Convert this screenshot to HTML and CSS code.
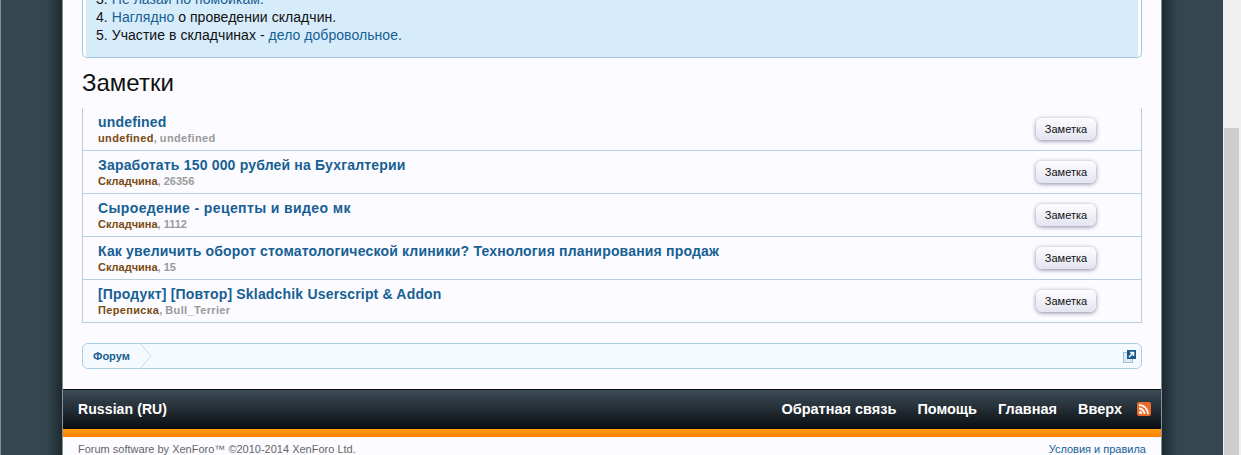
FILE: index.html
```html
<!DOCTYPE html>
<html lang="ru">
<head>
  <meta charset="UTF-8">
  <title>Заметки</title>
  <link rel="stylesheet" href="styles.css">
</head>
<body>
  <div class="viewport">
    <div class="page">
      <div class="edge"></div>
      <div class="shade-left"></div>
      <div class="wrapper">
        <div class="content">
          <div class="notice">
            <div class="notice-inner">
              <div>3. <a href="#">Не лазай по помойкам.</a></div>
              <div>4. <a href="#">Наглядно</a> о проведении складчин.</div>
              <div>5. Участие в складчинах - <a href="#">дело добровольное.</a></div>
            </div>
          </div>
          <h1>Заметки</h1>
          <ul class="notes">
            <li class="note">
              <div class="note-text">
                <a class="note-title" href="#">undefined</a>
                <div class="note-meta"><span class="forum latin">undefined</span>, <span class="latin">undefined</span></div>
              </div>
              <button class="note-btn">Заметка</button>
            </li>
            <li class="note">
              <div class="note-text">
                <a class="note-title" href="#">Заработать 150 000 рублей на Бухгалтерии</a>
                <div class="note-meta"><span class="forum">Складчина</span>, 26356</div>
              </div>
              <button class="note-btn">Заметка</button>
            </li>
            <li class="note">
              <div class="note-text">
                <a class="note-title wide" href="#">Сыроедение - рецепты и видео мк</a>
                <div class="note-meta"><span class="forum">Складчина</span>, 1112</div>
              </div>
              <button class="note-btn">Заметка</button>
            </li>
            <li class="note">
              <div class="note-text">
                <a class="note-title" href="#">Как увеличить оборот стоматологической клиники? Технология планирования продаж</a>
                <div class="note-meta"><span class="forum">Складчина</span>, 15</div>
              </div>
              <button class="note-btn">Заметка</button>
            </li>
            <li class="note">
              <div class="note-text">
                <a class="note-title" href="#">[Продукт] [Повтор] Skladchik Userscript &amp; Addon</a>
                <div class="note-meta"><span class="forum latin">Переписка</span>, <span class="latin">Bull_Terrier</span></div>
              </div>
              <button class="note-btn">Заметка</button>
            </li>
          </ul>
          <div class="crumbs">
            <a class="crumb" href="#">Форум</a>
            <svg class="crumb-tip" width="12" height="26" viewBox="0 0 12 26"><path d="M0 0 L11 13 L0 26" fill="#f5faff" stroke="#c4dcef"/></svg>
            <svg class="jump" width="13" height="13" viewBox="0 0 13 13">
              <rect x="0.5" y="2.5" width="9" height="10" fill="#dcebf7" stroke="#9dbdd6"/>
              <rect x="4" y="0" width="9" height="9" fill="#1d5a8c"/>
              <path d="M6 7 L10 3 M7 2.5 H10.5 V6" fill="none" stroke="#fff" stroke-width="1.5"/>
            </svg>
          </div>
        </div>
        <div class="footer">
          <a class="lang" href="#">Russian (RU)</a>
          <div class="footer-links">
            <a href="#">Обратная связь</a>
            <a href="#">Помощь</a>
            <a href="#">Главная</a>
            <a href="#">Вверх</a>
            <svg class="rss" width="14" height="14" viewBox="0 0 14 14">
              <rect width="14" height="14" rx="2" fill="#ec6a2a"/>
              <circle cx="3.5" cy="10.5" r="1.6" fill="#fff"/>
              <path d="M2 6.5 A5.5 5.5 0 0 1 7.5 12 M2 3 A9 9 0 0 1 11 12" fill="none" stroke="#fff" stroke-width="1.8"/>
            </svg>
          </div>
        </div>
        <div class="orange"></div>
        <div class="legal">
          <span>Forum software by XenForo™ ©2010-2014 XenForo Ltd.</span>
          <a href="#">Условия и правила</a>
        </div>
      </div>
      <div class="shade-right"></div>
      <div class="scrollbar"><div class="thumb"></div></div>
    </div>
  </div>
</body>
</html>
```

FILE: styles.css
```css
* {
  margin: 0;
  padding: 0;
  box-sizing: border-box;
}
html, body {
  height: 100%;
  overflow: hidden;
}
body {
  font-family: "Liberation Sans", Arial, sans-serif;
  font-size: 14px;
  color: #111;
  background: #344650;
}
a {
  text-decoration: none;
  color: #176093;
}
.viewport {
  height: 455px;
  overflow: hidden;
}
.page {
  display: flex;
  height: 455px;
}
.edge {
  width: 1px;
  background: #8c8c8c;
}
.shade-left {
  width: 61px;
  background: linear-gradient(to right, #344650 75%, #1c2a30);
}
.shade-right {
  width: 61px;
  background: linear-gradient(to right, #1c2a30, #344650 25%);
}
.wrapper {
  width: 1100px;
  background: #fcfbff;
  height: 455px;
  overflow: hidden;
  border-left: 1px solid #8a9299;
  border-right: 1px solid #8a9299;
}
.content {
  display: flow-root;
  padding: 0 19px 0 19px;
  height: 389px;
}
.notice {
  margin-top: -13px;
  height: 71px;
  padding: 3px;
  background: #fff;
  border: 1px solid #a5c8e0;
  border-top: 0;
  border-radius: 0 0 5px 5px;
}
.notice-inner {
  height: 67px;
  background: #d6ecfb;
  padding: 0 10px;
  line-height: 18px;
  letter-spacing: 0.05px;
}
h1 {
  font-size: 24px;
  font-weight: 400;
  line-height: 28px;
  margin-top: 11px;
  color: #111;
}
.notes {
  list-style: none;
  margin-top: 11px;
  border-left: 1px solid #b9cfdd;
  border-right: 1px solid #b9cfdd;
}
.note {
  display: flex;
  justify-content: space-between;
  height: 43px;
  padding: 6px 45px 0 15px;
  border-bottom: 1px solid #b9cfdd;
}
.note-title {
  display: block;
  font-weight: 700;
  font-size: 14px;
  line-height: 16px;
  letter-spacing: 0.18px;
  color: #176093;
}
.note-title.wide {
  letter-spacing: 0.38px;
}
.note-meta {
  font-size: 11px;
  font-weight: 700;
  line-height: 14px;
  margin-top: 1px;
  color: #9a9a9a;
}
.latin {
  letter-spacing: 0.35px;
}
.forum {
  color: #7a4a10;
}
.note-btn {
  width: 60px;
  height: 22px;
  margin-top: 4px;
  border: 0;
  border-radius: 6px;
  background: linear-gradient(to bottom, #fdfdff, #e4e4f0);
  box-shadow: 0 1px 4px rgba(60, 60, 100, 0.6);
  font-family: "Liberation Sans", sans-serif;
  font-size: 11px;
  color: #111;
}
.crumbs {
  display: flex;
  align-items: center;
  height: 26px;
  margin-top: 20px;
  background: #f5faff;
  border: 1px solid #a9cde6;
  border-radius: 6px;
}
.crumb {
  padding-left: 10px;
  width: 57px;
  font-size: 11px;
  font-weight: 700;
}
.crumb-tip {
  flex: none;
}
.jump {
  margin-left: auto;
  margin-right: 5px;
}
.footer {
  display: flex;
  justify-content: space-between;
  align-items: center;
  height: 40px;
  padding: 0 10px 2px 15px;
  border-top: 1px solid #0b0e12;
  background: linear-gradient(to bottom, #3c4c57, #0a0d11);
  font-weight: 700;
}
.footer a {
  color: #fff;
}
.lang {
  letter-spacing: 0.1px;
}
.footer-links {
  display: flex;
  align-items: center;
  gap: 21px;
  font-size: 14.5px;
}
.rss {
  margin-left: -6px;
}
.orange {
  height: 8px;
  background: linear-gradient(to bottom, #ff9c10, #ff8000);
}
.legal {
  display: flex;
  justify-content: space-between;
  padding: 6px 15px 0;
  font-size: 11px;
  color: #666;
}
.scrollbar {
  width: 18px;
  height: 455px;
  background: #f0f0f0;
  padding: 128px 2px 0 1px;
}
.thumb {
  height: 327px;
  background: #cdcdcd;
}
```
